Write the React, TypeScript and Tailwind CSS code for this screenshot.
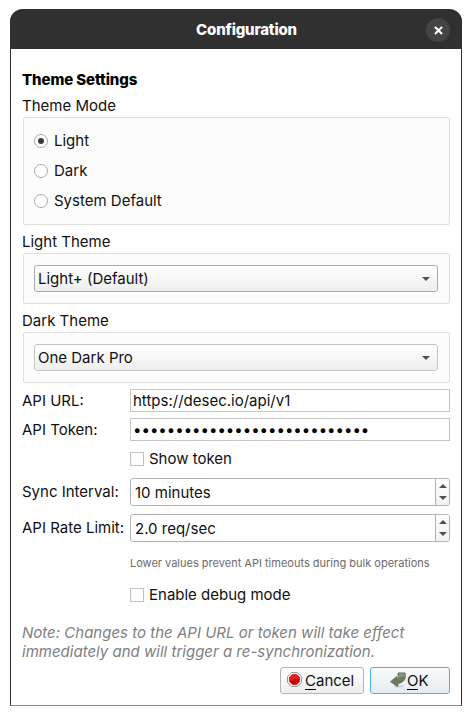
import React from 'react';

function Radio({ label, checked }: { label: string; checked?: boolean }) {
  return (
    <label className="flex h-[30px] items-center gap-[6px]">
      <span className="flex size-[14px] items-center justify-center rounded-full border border-[#a9a9a9] bg-white">
        {checked && <span className="size-[6px] rounded-full bg-[#3a3a3a]" />}
      </span>
      <span>{label}</span>
    </label>
  );
}

function Check({ label }: { label: string }) {
  return (
    <label className="ml-[108px] flex h-[14px] items-center gap-[5px]">
      <span className="size-[14px] border border-[#c1c1c1] bg-white" />
      <span className="whitespace-nowrap">{label}</span>
    </label>
  );
}

function Combo({ value, border }: { value: string; border: string }) {
  return (
    <div className="ml-px flex h-[51px] w-[427px] items-center rounded-[2px] border border-[#dedede] bg-[#fcfcfc] px-[10px]">
      <div
        className={`flex h-[27px] w-[404px] items-center justify-between rounded-[3px] border bg-linear-to-b from-white to-[#eeeeee] pr-[7px] pl-[3px] ${border}`}
      >
        <span>{value}</span>
        <svg width="8" height="4" viewBox="0 0 8 4">
          <path d="M0 0H8L4 4Z" fill="#505050" />
        </svg>
      </div>
    </div>
  );
}

function Spin({ label, value }: { label: string; value: string }) {
  return (
    <div className="flex h-7 items-center">
      <span className="w-[108px] whitespace-nowrap">{label}</span>
      <div className="flex h-7 w-[320px] items-center overflow-hidden rounded-[3px] border border-[#b3b3b3] bg-white">
        <span className="flex-1 pt-[2px] pl-[4px]">{value}</span>
        <span className="flex h-full w-[14px] flex-col items-center justify-center gap-2 border-l border-[#b3b3b3] bg-linear-to-b from-white to-[#f1f1f1]">
          <svg width="8" height="4" viewBox="0 0 8 4">
            <path d="M0 4H8L4 0Z" fill="#505050" />
          </svg>
          <svg width="8" height="4" viewBox="0 0 8 4">
            <path d="M0 0H8L4 4Z" fill="#505050" />
          </svg>
        </span>
      </div>
    </div>
  );
}

function Mnemonic({ first, rest }: { first: string; rest: string }) {
  return (
    <span className="flex h-[19px]">
      <span className="h-[19px] border-b border-black">{first}</span>
      {rest}
    </span>
  );
}

export default function App() {
  return (
    <div className="h-[716px] w-[472px] overflow-hidden bg-white pt-[9px] pl-[10px] font-['Inter',sans-serif] text-[15px] leading-[20px] text-[#101010]">
      <div className="flex h-[697px] w-[452px] flex-col rounded-t-[13px] border border-t-0 border-[#303030] border-b-[#8c8c8c] bg-white">
        <header className="-mx-px flex h-10 shrink-0 items-center justify-between rounded-t-[13px] bg-[#303030] px-[12px] pt-[2px] text-white">
          <span className="w-6" />
          <span className="pl-[21px] font-extrabold tracking-[-0.19px]">Configuration</span>
          <span className="flex size-6 items-center justify-center rounded-full bg-[#444444]">
            <svg width="9" height="9" viewBox="0 0 9 9">
              <path d="M1 1L8 8M8 1L1 8" stroke="white" strokeWidth="2.1" />
            </svg>
          </span>
        </header>

        <main className="flex flex-col pl-[11px]">
          <h1 className="mt-[21px] h-5 font-extrabold tracking-[-0.1px] text-black">Theme Settings</h1>
          <h2 className="mt-[6px] h-5">Theme Mode</h2>
          <div className="mt-px ml-px flex h-[108px] w-[427px] flex-col rounded-[2px] border border-[#dedede] bg-[#fcfcfc] pt-[8px] pl-[10px]">
            <Radio label="Light" checked />
            <Radio label="Dark" />
            <Radio label="System Default" />
          </div>

          <h2 className="mt-[7px] mb-px h-5">Light Theme</h2>
          <Combo value="Light+ (Default)" border="border-[#aaaaaa]" />
          <h2 className="mt-[7px] mb-px h-5">Dark Theme</h2>
          <Combo value="One Dark Pro" border="border-[#c6c6c6]" />

          <div className="mt-[6px] flex h-[23px] items-center">
            <span className="w-[108px]">API URL:</span>
            <div className="flex h-[23px] w-[320px] items-center border border-[#c4c4c4] bg-white pl-[2px]">
              https://desec.io/api/v1
            </div>
          </div>
          <div className="mt-[6px] flex h-[23px] items-center">
            <span className="w-[108px]">API Token:</span>
            <div className="flex h-[23px] w-[320px] items-center border border-[#c4c4c4] bg-white pl-[2px] text-black">
              ••••••••••••••••••••••••••••
            </div>
          </div>
          <div className="mt-[11px]">
            <Check label="Show token" />
          </div>
          <div className="mt-[12px] flex flex-col gap-2">
            <Spin label="Sync Interval:" value="10 minutes" />
            <Spin label="API Rate Limit:" value="2.0 req/sec" />
          </div>
          <p className="mt-[13px] ml-[108px] h-4 text-[11px] leading-4 whitespace-nowrap text-[#6b6b6b]">
            Lower values prevent API timeouts during bulk operations
          </p>
          <div className="mt-[17px]">
            <Check label="Enable debug mode" />
          </div>
          <p className="mt-[21px] leading-[19px] tracking-[0.01px] whitespace-nowrap text-[#808080] italic">
            Note: Changes to the API URL or token will take effect
            <br />
            immediately and will trigger a re-synchronization.
          </p>
          <footer className="mt-[6px] flex w-[428px] justify-end gap-[6px]">
            <button className="flex h-[27px] w-[84px] items-center rounded-[3px] border border-[#b4b4b4] bg-linear-to-b from-white to-[#eeeeee] pl-[6px]">
              <svg width="15" height="15" viewBox="0 0 15 15" className="mr-[3px] mb-[2px]">
                <path d="M4.7 .5H10.3L14.5 4.7V10.3L10.3 14.5H4.7L.5 10.3V4.7Z" fill="#f0f0ec" stroke="#969892" />
                <path d="M5.5 2.5H9.5L12.5 5.5V9.5L9.5 12.5H5.5L2.5 9.5V5.5Z" fill="#cc0000" stroke="#b00000" strokeWidth=".6" />
                <path d="M5.6 3H9.4L12 5.6V7Q7 7 3 9V5.6Z" fill="#e32222" />
              </svg>
              <Mnemonic first="C" rest="ancel" />
            </button>
            <button className="flex h-[27px] w-20 items-center rounded-[3px] border border-[#4dabf2] bg-linear-to-b from-[#f9fbfd] to-[#e5ebf0] pl-[19px]">
              <svg width="16" height="16" viewBox="0 0 16 16" className="mr-px mb-[2px]">
                <ellipse cx="9" cy="14.2" rx="5.5" ry="1.3" fill="#000" opacity=".1" />
                <path
                  d="M8 .9H15.2V5.5Q14.6 10.2 8 11.5L7.6 14.6L.6 9.7L6.6 4.6V7.4Q8 7 8 5.2Z"
                  fill="#6c7b5b"
                  stroke="#4c5744"
                  strokeWidth=".7"
                />
                <path d="M8.5 1.4H14.7V4.5L8.5 5.5Z" fill="#8b967c" />
              </svg>
              <Mnemonic first="O" rest="K" />
            </button>
          </footer>
        </main>
      </div>
    </div>
  );
}
